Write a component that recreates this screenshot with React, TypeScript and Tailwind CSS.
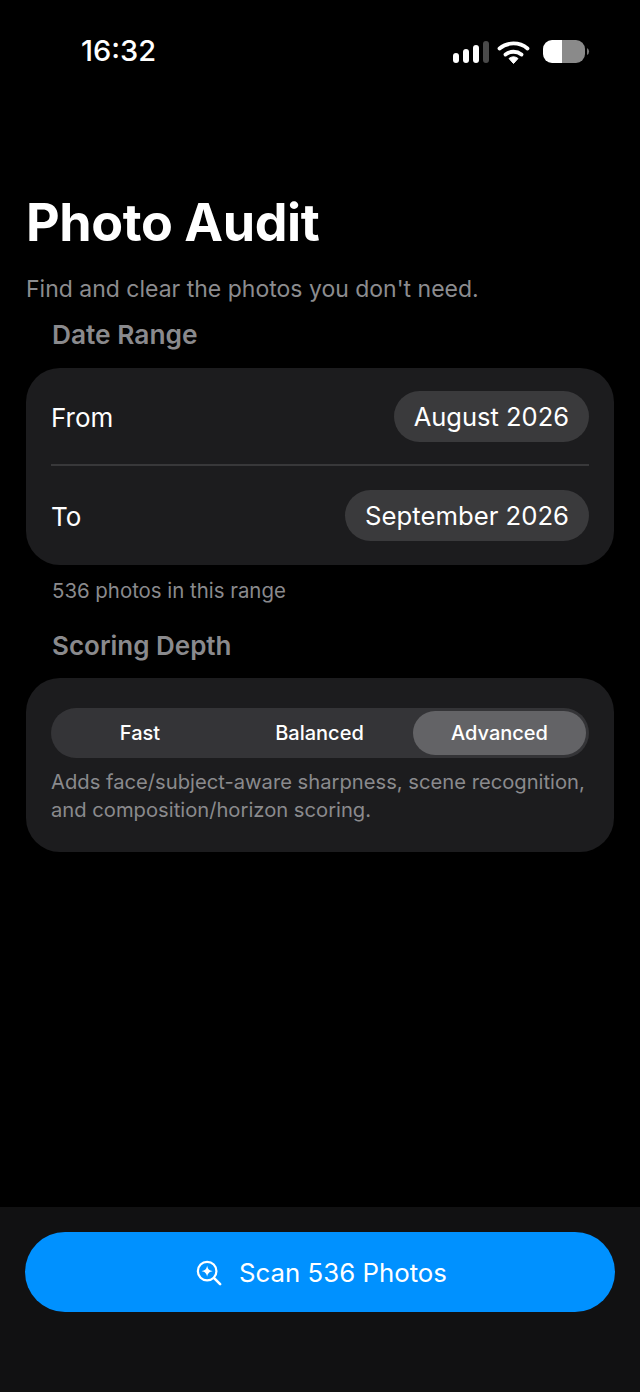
export default function App() {
  return (
    <div className="flex h-[1392px] w-[640px] flex-col overflow-hidden bg-black text-white font-['Inter',sans-serif]">
      <div className="flex h-[104px] shrink-0 items-start justify-between pl-[81px] pr-[47px] pt-[33px]">
        <span className="text-[29px] leading-[36px] font-medium">16:32</span>
        <svg width="140" height="30" viewBox="0 0 140 30" className="mt-[5px]" fill="none">
          <rect x="0" y="15" width="6" height="10" rx="3" fill="#fff" />
          <rect x="10" y="11" width="6" height="14" rx="3" fill="#fff" />
          <rect x="20" y="7" width="6" height="18" rx="3" fill="#fff" />
          <rect x="30" y="3" width="6" height="22" rx="3" fill="#4a4a4a" />
          <g transform="translate(-2.5 0)">
            <path d="M49 10.5a22 22 0 0 1 28 0" stroke="#fff" strokeWidth="3.8" strokeLinecap="round" />
            <path d="M55 16.5a13 13 0 0 1 16 0" stroke="#fff" strokeWidth="3.8" strokeLinecap="round" />
            <path d="M58.5 20.5a7.5 7.5 0 0 1 9 0L63 25.5z" fill="#fff" stroke="#fff" strokeWidth="1" strokeLinejoin="round" />
          </g>
          <path d="M109 2h14a9 9 0 0 1 9 9v5a9 9 0 0 1-9 9h-14z" fill="#8a8a8a" />
          <path d="M109 2h-10a9 9 0 0 0-9 9v5a9 9 0 0 0 9 9h10z" fill="#fff" />
          <path d="M134 10a4 4 0 0 1 0 7z" fill="#777" />
        </svg>
      </div>

      <h1 className="ml-[26px] mt-[90px] text-[52px] leading-[58px] font-bold tracking-[-0.4px]">Photo Audit</h1>
      <p className="ml-[26px] mt-[23px] text-[23px] leading-[28px] text-[#8c8c8f]">Find and clear the photos you don&apos;t need.</p>

      <h2 className="ml-[52px] mt-[16px] text-[26.3px] leading-[32px] font-semibold text-[#8a8a8d]">Date Range</h2>
      <section className="mx-[26px] mt-[17px] rounded-[34px] bg-[#1c1c1e] px-[25px] pb-[24px] pt-[23px]">
        <div className="flex h-[51px] items-center justify-between">
          <span className="pt-[2px] text-[26px]">From</span>
          <span className="flex h-[51px] items-center rounded-full bg-[#3a3a3c] pl-[20px] pr-[20px] pt-[2px] text-[25.5px]">August 2026</span>
        </div>
        <div className="mb-[24px] mt-[22px] h-[2px] bg-[#38383a]" />
        <div className="flex h-[51px] items-center justify-between">
          <span className="pt-[2px] text-[26px]">To</span>
          <span className="flex h-[51px] items-center rounded-full bg-[#3a3a3c] px-[20px] pt-[2px] text-[25.7px]">September 2026</span>
        </div>
      </section>
      <p className="ml-[52px] mt-[12px] text-[20.4px] leading-[28px] text-[#8a8a8d]">536 photos in this range</p>

      <h2 className="ml-[52px] mt-[25px] text-[26px] leading-[32px] font-semibold text-[#8a8a8d]">Scoring Depth</h2>
      <section className="mx-[26px] mt-[16px] rounded-[34px] bg-[#1c1c1e] px-[25px] pb-[28px] pt-[30px]">
        <div className="grid h-[50px] grid-cols-[172px_187px_173px] items-center rounded-full bg-[#343437] p-[3px] text-[20px] font-[450]">
          <span className="text-center">Fast</span>
          <span className="text-center">Balanced</span>
          <span className="flex h-[44px] items-center justify-center rounded-full bg-[#636366]">Advanced</span>
        </div>
        <p className="mt-[10px] text-[20.2px] leading-[28px] text-[#8a8a8d] whitespace-nowrap">
          Adds face/subject-aware sharpness, scene recognition,
          <br />
          and composition/horizon scoring.
        </p>
      </section>

      <footer className="mt-auto h-[185px] shrink-0 bg-[#111112] px-[25px] pt-[25px]">
        <button className="flex h-[80px] w-full items-center justify-center gap-[17px] rounded-[40px] bg-[#0091ff] pl-[3px] text-[25.8px] text-white">
          <svg width="26" height="26" viewBox="0 0 28 28" fill="none" className="mt-[1px]">
            <circle cx="12" cy="12" r="10" stroke="#fff" strokeWidth="2.4" />
            <path d="M19.5 19.5L26 26" stroke="#fff" strokeWidth="2.8" strokeLinecap="round" />
            <path d="M12 6c.6 3.8 2.2 5.4 6 6-3.8.6-5.4 2.2-6 6-.6-3.8-2.2-5.4-6-6 3.8-.6 5.4-2.2 6-6z" fill="#fff" />
          </svg>
          <span className="pt-[2px]">Scan 536 Photos</span>
        </button>
      </footer>
    </div>
  );
}
